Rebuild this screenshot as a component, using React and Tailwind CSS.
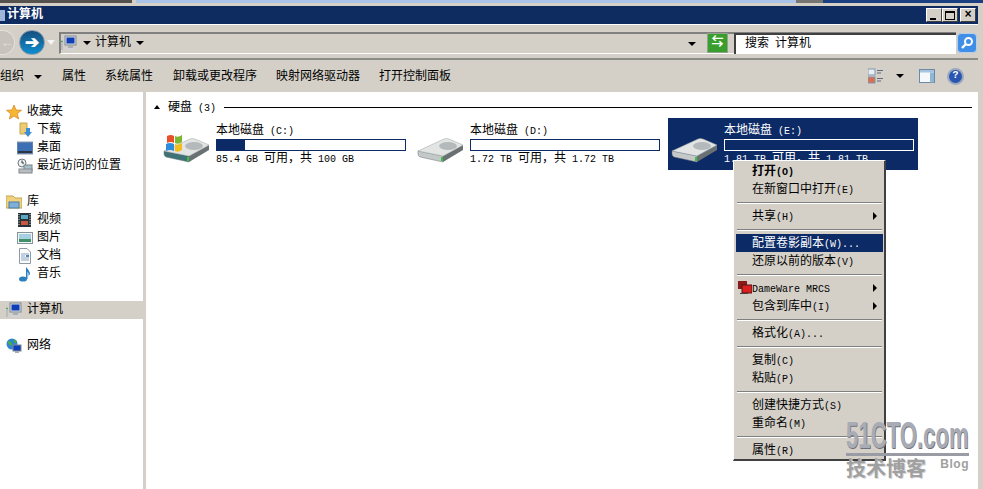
const FONT = { fontFamily: '"Liberation Mono", "Noto Sans CJK SC", monospace' };
const SANS = { fontFamily: '"Liberation Sans", sans-serif' };

// ascii runs set at 10px so they are 6px wide next to 12px CJK, like the bitmap font
function T({ children }) {
  const parts = String(children).split(/([\x20-\x7e]+)/).filter(Boolean);
  return parts.map((p, i) =>
    /^[\x20-\x7e]/.test(p) ? <span key={i} className="text-[10px] whitespace-pre">{p}</span> : <span key={i} className="text-[12px]">{p}</span>
  );
}

function Disk({ win }) {
  return (
    <svg width="48" height="36" viewBox="0 0 48 36" className="shrink-0 mt-[6px]">
      {/* front and side faces */}
      <path d="M1 22 L26 27 L26 33 L3 28 Q1 27 1 25 Z" fill={win ? "#3f7276" : "#c4c8c8"} stroke="#6d7576" strokeWidth=".5" />
      <path d="M26 27 L46 16 L46 21 L26 33 Z" fill="#6a7172" />
      {/* top */}
      <path d="M1 22 L27 10 Q29 9 32 10 L46 16 L26 27 Z" fill="#e3e5e5" stroke="#9aa0a1" strokeWidth=".5" />
      <ellipse cx="31" cy="17" rx="9" ry="4" fill="#b4babb" />
      <rect x="24" y="28" width="2" height="4" fill="#38c13f" />
      {win && (
        <g>
          <path d="M4 7 Q8 5 11 7 L11 14 Q8 12 4 14 Z" fill="#e8502a" />
          <path d="M12 7 Q15 9 19 6 L19 13 Q15 16 12 14 Z" fill="#7cb82f" />
          <path d="M3 15 Q7 13 11 15 L11 22 Q7 20 3 22 Z" fill="#2e8ddb" />
          <path d="M12 15 Q15 17 19 14 L19 21 Q15 24 12 22 Z" fill="#f2bd1d" />
        </g>
      )}
    </svg>
  );
}

function DiskItem({ name, free, pct, selected, className }) {
  return (
    <div className={`flex items-center h-[52px] pl-[3px] ${selected ? "bg-[#0c2a66] text-white" : "text-black"} ${className}`}>
      <Disk win={name.includes("C:")} />
      <div className="ml-[5px] pt-[2px] flex flex-col w-[190px] leading-[13px]">
        <span><T>{name}</T></span>
        <div className={`h-[12px] mt-[1px] border ${selected ? "border-white bg-[#0c2a66]" : "border-[#0c2a66] bg-white"}`}>
          <div className="h-full bg-[#0c2a66]" style={{ width: `${pct}%` }} />
        </div>
        <span className="mt-[1px]"><T>{free}</T></span>
      </div>
    </div>
  );
}

function NavRow({ icon, label, sub, active }) {
  return (
    <div className={`flex items-center h-[18px] text-[12px] text-black whitespace-nowrap ${sub ? "pl-[17px]" : "pl-[6px]"} ${active ? "bg-[#d4d0c8]" : ""}`}>
      <span className={`w-[16px] h-[16px] shrink-0 ${sub ? "mr-[4px]" : "mr-[5px]"}`}>{icon}</span>
      {label}
    </div>
  );
}

const Svg = ({ children }) => <svg width="16" height="16" viewBox="0 0 16 16">{children}</svg>;

const PcIcon = () => (
  <Svg>
    <rect x="4" y="1" width="11" height="9" fill="#d8dde2" stroke="#7c8894" />
    <rect x="5.5" y="2.5" width="8" height="6" fill="#0f3fb8" />
    <rect x="7" y="11" width="5" height="2" fill="#a9aeb3" />
    <rect x="5" y="13" width="9" height="2" fill="#d0d4d8" />
    <rect x="0" y="5" width="2" height="10" fill="#b9bdc0" />
    <rect x="0" y="6" width="2" height="1" fill="#3bb54a" />
  </Svg>
);

const icons = {
  star: <Svg><path d="M8 1 L10 6 L15.5 6.3 L11.2 9.7 L12.7 15 L8 12 L3.3 15 L4.8 9.7 L.5 6.3 L6 6 Z" fill="#f7b733" stroke="#d98a1f" strokeWidth=".8" /></Svg>,
  down: <Svg><path d="M3 1 H10 V12 H3 Z" fill="#eccb73" stroke="#c9a54f" /><path d="M9 6 H13 V10 H15 L11 15 L7 10 H9 Z" fill="#3b8fd8" /></Svg>,
  desk: <Svg><rect x="0" y="2" width="16" height="12" fill="#3d6fb5" stroke="#8d98a3" /><rect x="1" y="11" width="14" height="2" fill="#2c3442" /></Svg>,
  recent: <Svg><circle cx="5" cy="5" r="4" fill="#f0f2f2" stroke="#6e7a82" /><path d="M5 2.5 V5 H7" stroke="#333" fill="none" /><rect x="7" y="7" width="8" height="6" fill="#a7c0c9" stroke="#76848c" /><rect x="2" y="11" width="13" height="4" fill="#b8bec2" stroke="#83898d" /></Svg>,
  lib: <Svg><path d="M0 2 H7 L9 4 H16 V14 H0 Z" fill="#eed27f" stroke="#c4a350" /><rect x="3" y="8" width="10" height="6" fill="#7fb0da" stroke="#4a7ba6" /></Svg>,
  video: <Svg><rect x="1" y="1" width="13" height="14" fill="#26343a" /><rect x="4" y="3" width="7" height="4" fill="#58a8c4" /><rect x="4" y="9" width="7" height="4" fill="#c8583f" /><path d="M2 2 V14 M13 2 V14" stroke="#dfe5e5" strokeDasharray="1 1.5" /></Svg>,
  pic: <Svg><rect x=".5" y="2.5" width="15" height="11" fill="#f0f3f3" stroke="#87939a" /><rect x="2" y="4" width="12" height="5" fill="#a5d0e2" /><rect x="2" y="9" width="12" height="3" fill="#3f8f6a" /></Svg>,
  doc: <Svg><path d="M2.5 .5 H10 L13.5 4 V15.5 H2.5 Z" fill="#fbfcfd" stroke="#8d99a3" /><path d="M4 6 H12 M4 8 H8 M4 10 H12 M4 12 H12" stroke="#8aa3bd" /><rect x="9" y="7" width="3" height="2" fill="#4a86c5" /></Svg>,
  music: <Svg><ellipse cx="6" cy="13" rx="4" ry="2.6" fill="#2a7fc0" /><path d="M9 13 V1 Q12 4 13 7 Q13 9 11.5 10 Q12 7 10.5 5.5 V13 Z" fill="#2a7fc0" /></Svg>,
  net: <Svg><circle cx="6" cy="6" r="5.5" fill="#2f86d0" /><path d="M2 3 Q6 3 6 7 Q3 8 2 5 Z M7 1 L11 3 L9 6 Z" fill="#4aad4a" /><rect x="7" y="7" width="8" height="6" fill="#0f3fb8" stroke="#7c8894" /><rect x="9" y="13" width="4" height="2" fill="#a9aeb3" /></Svg>,
};

function MenuItem({ label, bold, arrow, selected, icon }) {
  return (
    <div className={`flex items-center h-[18px] ml-[2px] mr-[1px] pr-[6px] pl-[16px] relative ${selected ? "bg-[#0c2a66] text-white" : "text-black"} ${bold ? "font-bold" : ""}`}>
      {icon && (
        <svg width="14" height="14" viewBox="0 0 14 14" className="absolute left-[2px] top-[2px]">
          <rect x="0" y="0" width="9" height="8" fill="#8a1a1a" />
          <rect x="4" y="4" width="10" height="8" fill="#d92020" stroke="#5a1010" />
          <rect x="2" y="12" width="8" height="1" fill="#444" />
        </svg>
      )}
      <span className="flex-1 whitespace-nowrap"><T>{label}</T></span>
      {arrow && <span className="w-0 h-0 border-y-[4px] border-y-transparent border-l-[4px] border-l-black" />}
    </div>
  );
}

const Sep = () => <div className="h-[9px] flex items-center ml-[3px] mr-[2px]"><div className="w-full h-[2px] border-t border-t-[#808080] border-b border-b-white" /></div>;

const Caret = () => <span className="block w-0 h-0 border-x-[4px] border-x-transparent border-t-[4px] border-t-black" />;

const DITHER = "bg-[repeating-conic-gradient(#0a2a6a_0_25%,#122c58_0_50%)] bg-[length:2px_2px]";

export default function App() {
  return (
    <div className="w-[983px] h-[489px] relative overflow-hidden bg-[#d4d0c8] text-black" style={FONT}>
      {/* what shows of the window behind */}
      <div className="h-[3px] flex">
        <div className="w-[132px] bg-[#55524e]" />
        <div className="w-[4px] bg-[#d4d0c8]" />
        <div className="w-[660px] bg-[#a9c4e8]" />
        <div className="w-[27px] bg-[#77756f]" />
        <div className="flex-1 bg-[#1a3f80]" />
      </div>
      <div className="h-[3px] bg-[#d4d0c8]" />

      <div className="mr-[5px]">
        {/* title bar */}
        <div className={`h-[18px] flex items-center justify-between pr-[2px] ${DITHER}`}>
          <div className="flex items-center text-white font-bold text-[12px]">
            <span className="w-[5px] h-[11px] bg-[#9fb4d8] mr-[2px]" />计算机
          </div>
          <div className="flex">
            {["min", "max", "close"].map((k) => (
              <div key={k} className={`w-[16px] h-[14px] bg-[#d4d0c8] border border-t-white border-l-white border-r-[#404040] border-b-[#404040] flex items-center justify-center ${k === "close" ? "ml-[2px]" : ""}`}>
                {k === "min" && <span className="w-[6px] h-[2px] bg-black mt-[7px] -ml-[2px]" />}
                {k === "max" && <span className="w-[10px] h-[9px] border border-black border-t-2" />}
                {k === "close" && <span className="text-[12px] leading-none font-bold">×</span>}
              </div>
            ))}
          </div>
        </div>

        {/* address bar */}
        <div className="h-[36px] flex items-center border-t border-t-white border-b-2 border-b-[#8c8c86] pt-[2px] pr-[1px]">
          <div className="w-[15px] h-[25px] rounded-r-full bg-[#c8c4bd] border border-[#e4e2dc] border-l-0 flex items-center justify-center text-[#e4e2dc] text-[13px] font-bold leading-none" style={SANS}>←</div>
          <div className="w-[26px] h-[25px] rounded-full bg-linear-to-b from-[#14507f] to-[#0d8fd0] border border-[#8a9aa8] flex items-center justify-center text-white text-[17px] font-bold leading-none ml-[4px]" style={SANS}>➔</div>
          <span className="ml-[2px] w-0 h-0 border-x-[4px] border-x-transparent border-t-[5px] border-t-[#f4f4f4]" />
          <div className="ml-[4px] flex-1 h-[22px] flex items-center border-t-2 border-t-[#808080] border-l-2 border-l-[#808080] border-b border-b-white text-[12px]">
            <span className="w-[16px] h-[16px] shrink-0"><PcIcon /></span>
            <span className="ml-[6px]"><Caret /></span>
            <span className="ml-[4px]">计算机</span>
            <span className="ml-[5px]"><Caret /></span>
            <span className="ml-auto mr-[11px] mt-[1px]"><Caret /></span>
            <div className="w-[21px] h-[20px] bg-[#3a9e2e] border border-[#8ea58a] text-white text-[12px] font-bold leading-none flex items-center justify-center mr-[6px]">⇆</div>
            <div className="w-[222px] h-[21px] bg-white border-t-2 border-t-[#404040] border-l-2 border-l-[#404040] flex items-center pl-[9px]"><T>搜索 计算机</T></div>
          </div>
          <div className="w-[20px] h-[20px] ml-[1px] rounded-sm bg-[#3f8fe8] border border-[#b6cfe9] flex items-center justify-center">
            <svg width="14" height="14" viewBox="0 0 14 14"><circle cx="8.5" cy="5.5" r="3.5" fill="none" stroke="#fff" strokeWidth="2" /><path d="M6 8 L2 12" stroke="#fff" strokeWidth="2.4" /></svg>
          </div>
        </div>

        {/* toolbar */}
        <div className="h-[32px] flex items-center pt-[2px] text-[12px] whitespace-nowrap">
          <span>组织</span>
          <span className="ml-[10px] mr-[20px]"><Caret /></span>
          <span className="mr-[19px]">属性</span>
          <span className="mr-[20px]">系统属性</span>
          <span className="mr-[19px]">卸载或更改程序</span>
          <span className="mr-[19px]">映射网络驱动器</span>
          <span>打开控制面板</span>
          <div className="ml-auto flex items-center -mt-[2px]">
            <svg width="16" height="16" viewBox="0 0 16 16">
              <rect x="0" y="1" width="7" height="6" fill="#e8eef2" stroke="#7f97ad" />
              <rect x="0" y="9" width="7" height="6" fill="#d96f4f" stroke="#7f97ad" />
              <path d="M9 2.5 H15 M9 5 H13 M9 10.5 H15 M9 13 H13" stroke="#5b6b78" />
            </svg>
            <span className="ml-[12px] mr-[15px]"><Caret /></span>
            <svg width="16" height="14" viewBox="0 0 16 14">
              <rect x=".5" y=".5" width="15" height="13" fill="#f6f9fb" stroke="#6b8aa5" />
              <rect x="1" y="1" width="14" height="2.5" fill="#a8c4dc" />
              <rect x="11" y="3.5" width="4" height="10" fill="#8fb7d4" />
            </svg>
            <span className="ml-[12px] w-[17px] h-[17px] rounded-full bg-[#2a55b0] border-2 border-[#9aa9bd] text-white text-[10px] font-bold flex items-center justify-center leading-none mr-[14px]">?</span>
          </div>
        </div>

        {/* body */}
        <div className="h-[397px] flex bg-white">
          <div className="w-[143px] shrink-0 pt-[11px]">
            <NavRow icon={icons.star} label="收藏夹" />
            <NavRow sub icon={icons.down} label="下载" />
            <NavRow sub icon={icons.desk} label="桌面" />
            <NavRow sub icon={icons.recent} label="最近访问的位置" />
            <div className="h-[18px]" />
            <NavRow icon={icons.lib} label="库" />
            <NavRow sub icon={icons.video} label="视频" />
            <NavRow sub icon={icons.pic} label="图片" />
            <NavRow sub icon={icons.doc} label="文档" />
            <NavRow sub icon={icons.music} label="音乐" />
            <div className="h-[18px]" />
            <NavRow active icon={<PcIcon />} label="计算机" />
            <div className="h-[18px]" />
            <NavRow icon={icons.net} label="网络" />
          </div>
          <div className="w-[3px] bg-[#d4d0c8] shrink-0" />
          <div className="flex-1 pl-[8px] pt-[7px]">
            <div className="flex items-center h-[16px] pr-[6px]">
              <span className="w-0 h-0 border-x-[3px] border-x-transparent border-b-[4px] border-b-black" />
              <span className="ml-[8px] whitespace-pre"><T>硬盘 (3)</T></span>
              <span className="ml-[8px] flex-1 h-px bg-black" />
            </div>
            <div className="flex mt-[3px] ml-[6px]">
              <DiskItem name="本地磁盘 (C:)" free={"85.4 GB 可用\uFF0C共 100 GB"} pct={15} className="w-[254px]" />
              <DiskItem name="本地磁盘 (D:)" free={"1.72 TB 可用\uFF0C共 1.72 TB"} pct={0} className="w-[254px]" />
              <DiskItem selected name="本地磁盘 (E:)" free={"1.81 TB 可用\uFF0C共 1.81 TB"} pct={0} className="w-[250px]" />
            </div>
          </div>
        </div>
      </div>

      {/* context menu */}
      <div className="absolute left-[733px] top-[160px] w-[153px] h-[301px] bg-[#d4d0c8] border-t border-l border-t-white border-l-white border-r-2 border-b-2 border-r-[#404040] border-b-[#404040] pt-[1px]">
        <MenuItem bold label="打开(O)" />
        <MenuItem label="在新窗口中打开(E)" />
        <Sep />
        <MenuItem label="共享(H)" arrow />
        <Sep />
        <MenuItem selected label="配置卷影副本(W)..." />
        <MenuItem label="还原以前的版本(V)" />
        <Sep />
        <MenuItem icon label="DameWare MRCS" arrow />
        <MenuItem label="包含到库中(I)" arrow />
        <Sep />
        <MenuItem label="格式化(A)..." />
        <Sep />
        <MenuItem label="复制(C)" />
        <MenuItem label="粘贴(P)" />
        <Sep />
        <MenuItem label="创建快捷方式(S)" />
        <MenuItem label="重命名(M)" />
        <Sep />
        <MenuItem label="属性(R)" />
      </div>

      {/* watermark */}
      <div className="absolute left-[846px] top-[420px] w-[123px] text-[#a9acb5]">
        <div className="h-[32px] leading-[32px] text-[36px] font-bold origin-left scale-x-[.615] whitespace-nowrap [text-shadow:1px_1px_0_#6f7179]" style={SANS}>51CTO.com</div>
        <div className="h-[3px] bg-[#9a9ca5] mt-[1px]" />
        <div className="flex justify-between items-start mt-[2px] text-[#a0a0a0]">
          <span className="text-[20px] leading-[20px] font-bold [text-shadow:1px_1px_0_#d8d8d8]" style={{ fontFamily: '"Noto Sans CJK SC", sans-serif' }}>技术博客</span>
          <span className="text-[12px] leading-[13px] font-bold tracking-[.5px]" style={SANS}>Blog</span>
        </div>
      </div>
    </div>
  );
}
